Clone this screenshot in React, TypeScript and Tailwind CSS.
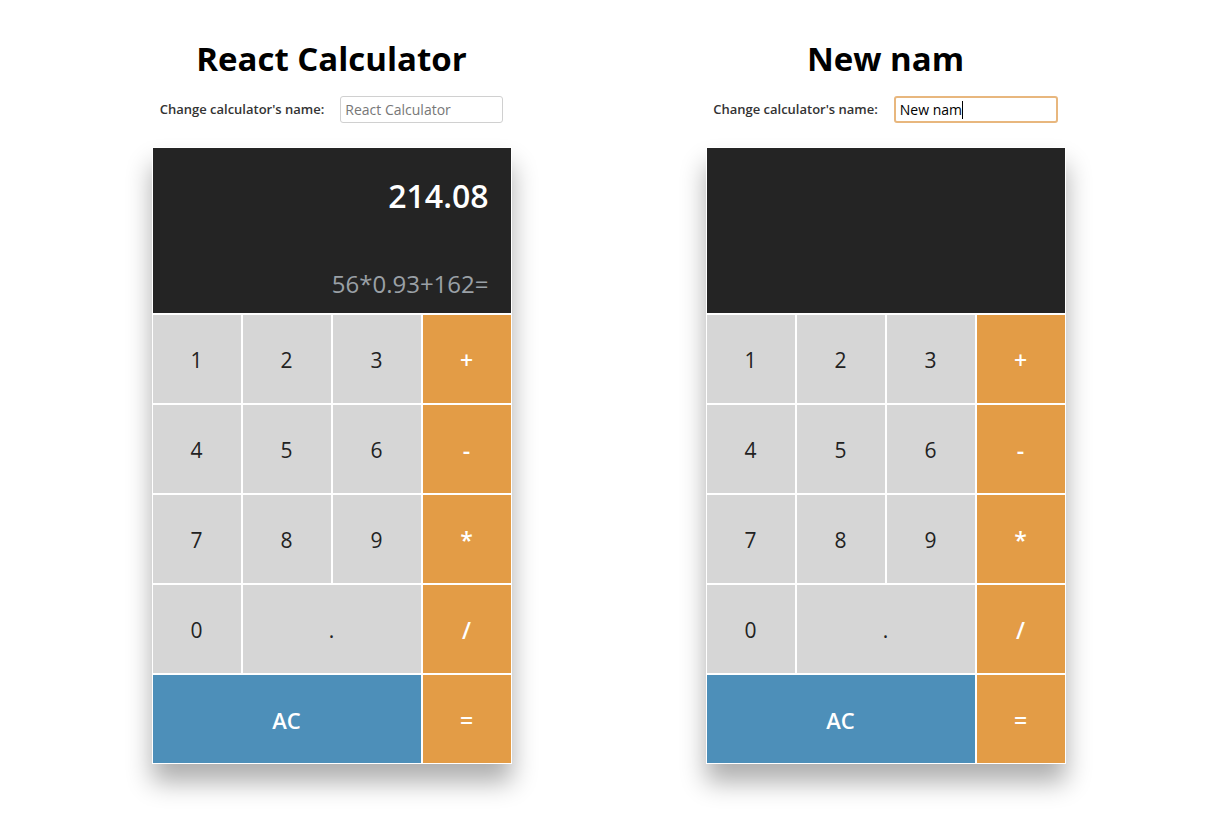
import * as React from 'react';

type Key = { label: string; kind: 'num' | 'op' | 'clear'; span?: string };

const KEYS: Key[] = [
  { label: '1', kind: 'num' },
  { label: '2', kind: 'num' },
  { label: '3', kind: 'num' },
  { label: '+', kind: 'op' },
  { label: '4', kind: 'num' },
  { label: '5', kind: 'num' },
  { label: '6', kind: 'num' },
  { label: '-', kind: 'op' },
  { label: '7', kind: 'num' },
  { label: '8', kind: 'num' },
  { label: '9', kind: 'num' },
  { label: '*', kind: 'op' },
  { label: '0', kind: 'num' },
  { label: '.', kind: 'num', span: 'col-span-2' },
  { label: '/', kind: 'op' },
  { label: 'AC', kind: 'clear', span: 'col-span-3' },
  { label: '=', kind: 'op' },
];

const keyStyles = {
  num: 'bg-[#d6d6d6] text-[#222] text-[21px]',
  op: 'bg-[#e39c46] text-white text-[23px] font-semibold',
  clear: 'bg-[#4d8fb9] text-white text-[22px] font-semibold',
};

type CalcProps = {
  title: string;
  inputValue: string;
  placeholder?: string;
  focused?: boolean;
  result?: string;
  expression?: string;
};

function Calculator({ title, inputValue, placeholder, focused = false, result, expression }: CalcProps) {
  return (
    <div className="w-[360px] flex flex-col items-center">
      <h1 className="mt-[34px] text-[33px] leading-[50px] font-bold text-black">{title}</h1>

      {/* name field */}
      <div className="mt-[12px] flex items-center gap-[16px]">
        <label className="text-[13px] font-semibold text-[#333]">Change calculator's name:</label>
        <div
          className={
            focused
              ? 'w-[164px] h-[27px] rounded-[3px] border-2 border-[#e8b77e] px-[4px] flex items-center text-[14px] text-black'
              : 'w-[163px] h-[27px] rounded-[3px] border border-[#d0d0d0] px-[4px] flex items-center text-[14px] text-[#777]'
          }
        >
          {inputValue || placeholder}
          {focused && <span className="w-px h-[18px] bg-black" />}
        </div>
      </div>

      {/* calculator body */}
      <div className="mt-[24px] w-[360px] bg-white shadow-[0_18px_24px_rgba(0,0,0,0.32)]">
        <div className="h-[167px] border border-white bg-[#242424] flex flex-col items-end pr-[22px]">
          <div className="mt-[25px] h-[46px] text-[32px] leading-[46px] font-semibold text-white">{result}</div>
          <div className="mt-[49px] text-[24px] leading-[32px] text-[#9aa0a6]">{expression}</div>
        </div>
        <div className="grid grid-cols-4">
          {KEYS.map((k) => (
            <button
              key={k.label}
              className={`h-[90px] border border-white flex items-center justify-center pt-[3px] ${keyStyles[k.kind]} ${k.span ?? ''}`}
            >
              {k.label}
            </button>
          ))}
        </div>
      </div>
    </div>
  );
}

export default function App() {
  return (
    <div className="min-h-[828px] bg-white flex justify-center gap-[194px] font-['Open_Sans',sans-serif]">
      <Calculator
        title="React Calculator"
        inputValue=""
        placeholder="React Calculator"
        result="214.08"
        expression="56*0.93+162="
      />
      <Calculator title="New nam" inputValue="New nam" focused />
    </div>
  );
}
